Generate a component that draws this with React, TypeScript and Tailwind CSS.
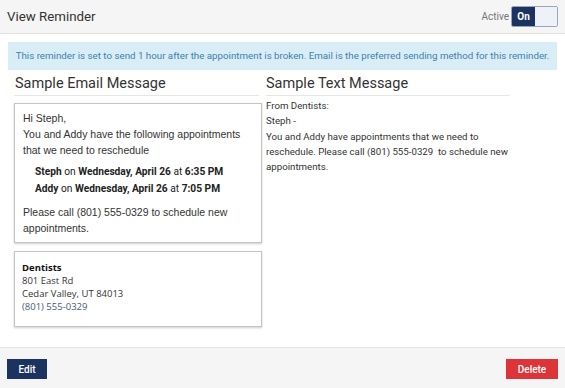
import React from "react";

const ViewReminder = () => {
    return (
        <div className="w-[565px] h-[388px] flex flex-col bg-white text-[#333] font-['Roboto',sans-serif] overflow-hidden">
            <header className="h-[34px] shrink-0 bg-[#f5f5f5] border-b border-[#e2e2e2] flex items-center justify-between pl-[7px] pr-[7px]">
                <h1 className="text-[13.3px] text-[#333]">View Reminder</h1>
                <div className="flex items-center gap-[2px]">
                    <span className="text-[10px] text-[#777]">Active</span>
                    <div className="flex h-[21px] border border-[#9aa6b8] rounded-[2px] overflow-hidden">
                        <span className="w-[23px] bg-[#1b3361] text-white text-[10px] font-bold flex items-center justify-center">On</span>
                        <span className="w-[22px] bg-[#eef2f8]"></span>
                    </div>
                </div>
            </header>

            <main className="flex-1 px-[8px] pt-[8px]">
                <div className="h-[28px] bg-[#d9edf7] text-[#3d7fae] text-[9.75px] whitespace-nowrap flex items-center justify-center">
                    This reminder is set to send 1 hour after the appointment is broken. Email is the preferred sending method for this reminder.
                </div>

                <div className="flex gap-[4px] pl-[6px] pt-[4px]">
                    <section className="w-[248px]">
                        <h2 className="text-[14.5px] leading-[20px] pl-[1px] pb-[1px] border-b border-[#e6e6e6] w-[245px]">Sample Email Message</h2>
                        <div className="mt-[7px] border border-[#c4c4c4] shadow-[0_1px_2px_rgba(0,0,0,0.2)] pl-[8px] pr-[6px] pt-[6px] pb-[6px] text-[10.5px] leading-[16px] font-['Liberation_Sans',sans-serif] text-[#333]">
                            <p>Hi Steph,</p>
                            <p>You and Addy have the following appointments that we need to reschedule</p>
                            <div className="pl-[12px] pt-[5px] pb-[7px] text-[10.2px] leading-[17px] text-[#222] font-['Roboto',sans-serif]">
                                <p><b>Steph</b> on <b>Wednesday, April 26</b> at <b>6:35 PM</b></p>
                                <p><b>Addy</b> on <b>Wednesday, April 26</b> at <b>7:05 PM</b></p>
                            </div>
                            <p>Please call (801) 555-0329 to schedule new appointments.</p>
                        </div>
                        <div className="mt-[8px] h-[76px] border border-[#c4c4c4] shadow-[0_1px_2px_rgba(0,0,0,0.2)] pl-[7px] pt-[9px] text-[9.5px] leading-[13px] font-['Open_Sans',sans-serif] text-[#333]">
                            <p className="font-bold text-[#111]">Dentists</p>
                            <p>801 East Rd</p>
                            <p>Cedar Valley, UT 84013</p>
                            <p className="text-[#4b587a]">(801) 555-0329</p>
                        </div>
                    </section>

                    <section className="w-[244px]">
                        <h2 className="text-[14.5px] leading-[20px] pb-[1px] border-b border-[#e6e6e6]">Sample Text Message</h2>
                        <div className="pt-[2px] text-[9.7px] leading-[15.25px] text-[#333]">
                            <p>From Dentists:</p>
                            <p>Steph -</p>
                            <p>You and Addy have appointments that we need to reschedule. Please call (801) 555-0329 &nbsp;to schedule new appointments.</p>
                        </div>
                    </section>
                </div>
            </main>

            <footer className="h-[41px] shrink-0 bg-[#f5f5f5] border-t border-[#e2e2e2] flex items-center justify-between px-[7px] pt-[2px]">
                <button className="w-[40px] h-[20px] bg-[#1b3361] text-white text-[10px] font-medium">Edit</button>
                <button className="w-[52px] h-[20px] bg-[#dc3439] text-white text-[10px] font-medium">Delete</button>
            </footer>
        </div>
    );
};

export default function App() {
    return <ViewReminder />;
}
